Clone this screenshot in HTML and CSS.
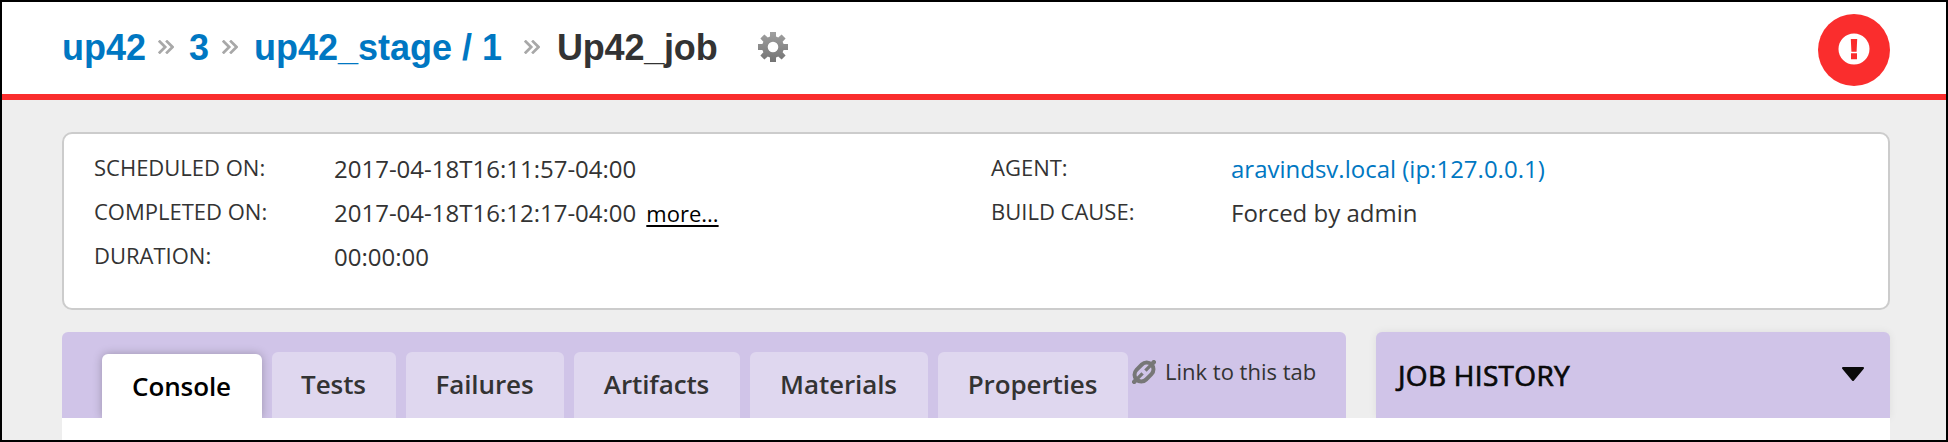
FILE: index.html
```html
<!DOCTYPE html>
<html lang="en">
<head>
<meta charset="utf-8">
<title>Up42_job</title>
<link rel="stylesheet" href="styles.css">
</head>
<body>
<svg class="defs" width="0" height="0">
  <symbol id="raquo" viewBox="0 0 16 14">
    <path d="M.8 .6 7.2 7 .8 13.4M8.1.6 14.5 7l-6.4 6.4" fill="none" stroke="#a8a8a8" stroke-width="2.7"/>
  </symbol>
</svg>
<div class="page">
  <header class="header">
    <nav class="crumbs">
      <a class="crumb c1" href="#">up42</a>
      <svg class="sep"><use href="#raquo"/></svg>
      <a class="crumb c2" href="#">3</a>
      <svg class="sep"><use href="#raquo"/></svg>
      <a class="crumb c3" href="#">up42_stage / 1</a>
      <svg class="sep"><use href="#raquo"/></svg>
      <h1 class="crumb c4">Up42_job</h1>
    </nav>
    <svg class="gear" viewBox="-15 -15 30 30">
      <defs><linearGradient id="g" x1="0" y1="0" x2="0" y2="1"><stop offset="0" stop-color="#a0a0a0"/><stop offset="1" stop-color="#737373"/></linearGradient></defs>
      <path fill="url(#g)" fill-rule="evenodd" d="M-3-15H3V-10.6L5.2-9.6 8.6-12.6 12.6-8.6 9.6-5.2 10.6-3H15V3H10.6L9.6 5.2 12.6 8.6 8.6 12.6 5.2 9.6 3 10.6V15H-3V10.6L-5.2 9.6-8.6 12.6-12.6 8.6-9.6 5.2-10.6 3H-15V-3H-10.6L-9.6-5.2-12.6-8.6-8.6-12.6-5.2-9.6-3-10.6ZM0-5.3A5.3 5.3 0 1 0 0 5.3 5.3 5.3 0 1 0 0-5.3Z"/>
    </svg>
    <div class="status">
      <svg viewBox="0 0 72 72" width="72" height="72">
        <circle cx="36" cy="35" r="15.5" fill="#fff"/>
        <path d="M32.8 25h6.4l-.6 12.8h-5.2zM33 39.3h6v6h-6z" fill="#fa2d2d"/>
      </svg>
    </div>
  </header>
  <main class="content">
    <section class="summary">
      <dl class="facts">
        <dt>SCHEDULED ON:</dt><dd><span class="time">2017-04-18T16:11:57-04:00</span></dd>
        <dt>COMPLETED ON:</dt><dd><span class="time">2017-04-18T16:12:17-04:00</span><a class="more" href="#">more...</a></dd>
        <dt>DURATION:</dt><dd>00:00:00</dd>
      </dl>
      <dl class="facts">
        <dt>AGENT:</dt><dd><a class="agent" href="#">aravindsv.local (ip:127.0.0.1)</a></dd>
        <dt>BUILD CAUSE:</dt><dd>Forced by admin</dd>
      </dl>
    </section>
    <div class="panels">
      <div class="tabbar">
        <a class="tab active t1">Console</a>
        <a class="tab t2">Tests</a>
        <a class="tab t3">Failures</a>
        <a class="tab t4">Artifacts</a>
        <a class="tab t5">Materials</a>
        <a class="tab t6">Properties</a>
        <a class="tablink">
          <svg class="chain" viewBox="0 0 24 24">
            <g transform="rotate(-45 12 12)" fill="none" stroke="#777">
              <rect x="1.4" y="5.2" width="21.2" height="13.6" rx="6.8" stroke-width="4"/>
              <path d="M-4 12H1M23 12h5" stroke-width="4.4"/>
              <path d="M3 12h7M14 12h7" stroke-width="3.4"/>
            </g>
          </svg>
          <span>Link to this tab</span>
        </a>
      </div>
      <div class="history">
        <h2>JOB HISTORY</h2>
        <svg class="caret" viewBox="0 0 24 15"><path d="M2 1h20L12 13Z" fill="#0a0a0a" stroke="#0a0a0a" stroke-width="2" stroke-linejoin="round"/></svg>
      </div>
    </div>
    <div class="panelbody"></div>
  </main>
</div>
</body>
</html>
```
FILE: styles.css
```css
* { box-sizing: border-box; }
body { margin: 0; font-family: "Open Sans", sans-serif; color: #333; }
a { text-decoration: none; color: inherit; }
h1, h2, dl, dd { margin: 0; }
svg { display: block; flex: none; }
.defs { position: absolute; }
.page { width: 1948px; height: 442px; border: 2px solid #000; background: #eee; overflow: hidden; display: flex; flex-direction: column; }

.header { height: 98px; flex: none; background: #fff; border-bottom: 6px solid #fa2d2d; padding: 0 56px 0 60px; display: flex; align-items: flex-start; }
.crumbs { display: flex; padding-top: 25px; }
.crumb { font: bold 36px/42px "Liberation Sans", sans-serif; color: #0077c2; white-space: nowrap; flex: none; }
.c1 { width: 96px; }
.c2 { width: 33px; margin-left: 15px; }
.c3 { width: 270px; margin-left: 16px; }
.c4 { width: 162px; margin-left: 17px; color: #333; letter-spacing: -.2px; }
.sep { width: 16px; height: 14px; margin-top: 13px; }
.gear { width: 30px; height: 30px; margin: 30px 0 0 39px; }
.status { width: 72px; height: 72px; border-radius: 50%; background: #fa2d2d; margin: 12px 0 0 auto; }

.content { padding: 32px 56px 0 60px; flex: 1; display: flex; flex-direction: column; }
.summary { height: 178px; flex: none; background: #fff; border: 2px solid #ccc; border-radius: 10px; padding: 13px 30px; display: grid; grid-template-columns: 897px 1fr; }
.facts { display: grid; grid-template-columns: 240px 1fr; grid-auto-rows: 44px; align-content: start; }
.facts dt { font-size: 22px; line-height: 40px; white-space: nowrap; }
.facts dd { font-size: 24px; line-height: 44px; white-space: nowrap; }
.more { font-size: 22px; color: #000; margin-left: 10px; text-decoration: underline; text-decoration-thickness: 2px; text-underline-offset: 3px; }
.agent { color: #0077c2; }

.panels { display: flex; gap: 30px; height: 86px; margin-top: 22px; flex: none; }
.tabbar { width: 1284px; background: #d0c4e8; border-radius: 6px 6px 0 0; padding: 20px 30px 0 40px; display: flex; gap: 10px; }
.tab { height: 66px; flex: none; background: #dfd7ef; border-radius: 6px 6px 0 0; font-size: 26px; font-weight: 600; line-height: 64px; text-align: center; white-space: nowrap; letter-spacing: -.1px; padding-right: 1px; }
.active { background: #fff; color: #000; margin-top: 2px; height: 64px; box-shadow: 0 0 10px rgba(0,0,0,.25); clip-path: inset(-12px -12px 0 -12px); }
.t1 { width: 160px; }
.t2 { width: 124px; }
.t3 { width: 158px; }
.t4 { width: 166px; }
.t5 { width: 178px; }
.t6 { width: 190px; }
.tablink { display: flex; margin-left: -6px; font-size: 22px; line-height: 38px; white-space: nowrap; gap: 9px; }
.chain { width: 24px; height: 24px; margin-top: 8px; }
.history { width: 514px; background: #d0c4e8; border-radius: 6px 6px 0 0; padding: 0 25px 0 22px; display: flex; justify-content: space-between; box-shadow: 0 0 8px rgba(0,0,0,.07); }
.history h2 { font-size: 28px; font-weight: 400; line-height: 86px; color: #0a0a0a; letter-spacing: .3px; -webkit-text-stroke: .7px #0a0a0a; }
.caret { width: 24px; height: 15px; margin-top: 35px; }
.panelbody { background: #fff; flex: 1; position: relative; }
```
